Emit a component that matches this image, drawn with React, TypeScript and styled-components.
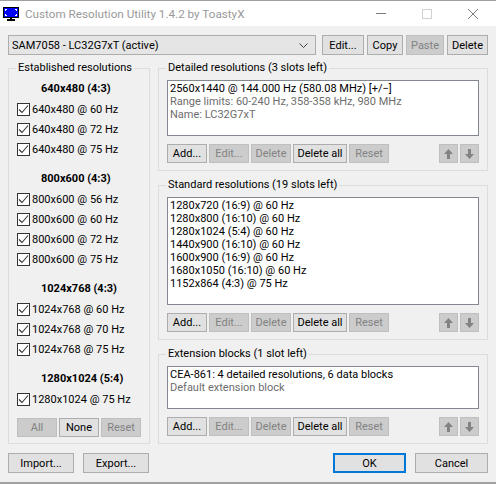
import React from "react";
import styled, { createGlobalStyle, css } from "styled-components";

const GlobalStyle = createGlobalStyle`
  html, body {
    margin: 0;
    padding: 0;
    background: #f0f0f0;
  }
  body {
    font-family: "Segoe UI", Roboto, "Liberation Sans", sans-serif;
    font-size: 11px;
    color: #000;
  }
  * {
    box-sizing: border-box;
  }
`;

const Window = styled.div`
  width: 496px;
  height: 484px;
  display: flex;
  flex-direction: column;
  background: #f0f0f0;
  border-top: 1px solid #a0a0a0;
  border-bottom: 2px solid #a0a0a0;
`;

const TitleBar = styled.div`
  height: 25px;
  display: flex;
  align-items: center;
  background: #fff;
  padding-left: 3px;
`;

const Title = styled.span`
  color: #999;
  font-size: 11.7px;
  margin-left: 6px;
  white-space: nowrap;
`;

const Captions = styled.div`
  margin-left: auto;
  display: flex;
  height: 100%;
`;

const CaptionButton = styled.div`
  width: 46px;
  height: 100%;
  display: flex;
  align-items: center;
  justify-content: center;
`;

const Body = styled.div`
  flex: 1;
  display: flex;
  flex-direction: column;
  padding: 9px 8px 0;
`;

const TopRow = styled.div`
  display: flex;
  gap: 3px;
  height: 20px;
`;

const Combo = styled.div`
  flex: 1;
  display: flex;
  align-items: center;
  margin-right: 3px;
  padding: 0 7px 0 3px;
  background: #e5e5e5;
  border: 1px solid #adadad;
  white-space: nowrap;

  svg {
    margin-left: auto;
  }
`;

const Button = styled.button<{ $w: number; $h?: number; $default?: boolean }>`
  flex: none;
  width: ${(p) => p.$w}px;
  height: ${(p) => p.$h ?? 19}px;
  margin: 0;
  padding: 0;
  font: inherit;
  line-height: 1;
  color: #000;
  background: #e1e1e1;
  border: 1px solid #adadad;
  border-radius: 0;
  display: flex;
  align-items: center;
  justify-content: center;
  white-space: nowrap;

  &:disabled {
    color: #838383;
    background: #cccccc;
    border-color: #bfbfbf;
  }

  ${(p) =>
    p.$default &&
    css`
      border: 2px solid #0078d7;
    `}
`;

const Main = styled.div`
  display: flex;
  gap: 8px;
  margin-top: 6px;
`;

const Group = styled.fieldset<{ $w?: number }>`
  margin: 0;
  min-width: 0;
  padding: 0 8px 7px;
  border: 1px solid #dcdcdc;
  ${(p) =>
    p.$w &&
    css`
      width: ${p.$w}px;
      flex: none;
    `}
`;

const Legend = styled.legend`
  margin-left: -1px;
  padding: 0 2px;
  line-height: 14px;
  white-space: nowrap;
`;

const LeftGroup = styled(Group)`
  padding-top: 4px;
  padding-bottom: 6px;
`;

const ResSection = styled.div`
  & + & {
    margin-top: 10px;
  }
`;

const ResHeading = styled.div`
  height: 20px;
  line-height: 20px;
  padding-left: 24px;
  font-weight: bold;
`;

const CheckRow = styled.label`
  height: 20px;
  display: flex;
  align-items: center;
  gap: 2px;
  white-space: nowrap;
`;

const CheckBox = styled.span`
  width: 13px;
  height: 13px;
  flex: none;
  display: flex;
  align-items: center;
  justify-content: center;
  background: #fff;
  border: 1px solid #333;
`;

const ButtonRow = styled.div`
  display: flex;
  gap: 2px;
  margin-top: 8px;
`;

const LeftButtons = styled(ButtonRow)`
  margin-top: 9px;
`;

const RightColumn = styled.div`
  flex: 1;
  display: flex;
  flex-direction: column;
  gap: 7px;
`;

const RightGroup = styled(Group)`
  padding-top: 5px;
`;

const ListBox = styled.div<{ $h: number }>`
  height: ${(p) => p.$h}px;
  padding: 1px 2px;
  background: #fff;
  border: 1px solid #828790;
  line-height: 13px;
  white-space: nowrap;
`;

const ListLine = styled.div<{ $muted?: boolean }>`
  color: ${(p) => (p.$muted ? "#6d6d6d" : "#000")};
`;

const Arrows = styled.div`
  margin-left: auto;
  display: flex;
  gap: 2px;
`;

const BottomRow = styled.div`
  display: flex;
  gap: 9px;
  margin-top: 9px;
`;

const Spacer = styled.div`
  flex: 1;
`;

const AppIcon = () => (
  <svg width="16" height="14" viewBox="0 0 16 14">
    <rect x="0" y="0" width="16" height="11" fill="#000" />
    <rect x="1" y="1" width="14" height="9" fill="#0000ff" />
    <path
      d="M2 2h2v1H3v1H2zM12 2h2v2h-1V3h-1zM2 7h1v1h1v1H2zM13 7h1v2h-2V8h1z"
      fill="#fff"
    />
    <rect x="7" y="11" width="2" height="1" fill="#000" />
    <rect x="4" y="12" width="8" height="2" fill="#000" />
  </svg>
);

const Check = () => (
  <svg width="11" height="11" viewBox="0 0 11 11">
    <path d="M1 5.5l3 3L10 1.5" fill="none" stroke="#333" strokeWidth="1.1" />
  </svg>
);

const Chevron = () => (
  <svg width="9" height="5" viewBox="0 0 9 5">
    <path d="M0.5 0.5l4 4 4-4" fill="none" stroke="#444" strokeWidth="1" />
  </svg>
);

const ArrowIcon = ({ down }: { down?: boolean }) => (
  <svg width="9" height="10" viewBox="0 0 9 10">
    <path d={down ? "M4.5 10L9 5H6V0H3v5H0z" : "M4.5 0L9 5H6v5H3V5H0z"} fill="#838383" />
  </svg>
);

const resolutionGroups = [
  { title: "640x480 (4:3)", modes: ["640x480 @ 60 Hz", "640x480 @ 72 Hz", "640x480 @ 75 Hz"] },
  {
    title: "800x600 (4:3)",
    modes: ["800x600 @ 56 Hz", "800x600 @ 60 Hz", "800x600 @ 72 Hz", "800x600 @ 75 Hz"],
  },
  {
    title: "1024x768 (4:3)",
    modes: ["1024x768 @ 60 Hz", "1024x768 @ 70 Hz", "1024x768 @ 75 Hz"],
  },
  { title: "1280x1024 (5:4)", modes: ["1280x1024 @ 75 Hz"] },
];

const standardModes = [
  "1280x720 (16:9) @ 60 Hz",
  "1280x800 (16:10) @ 60 Hz",
  "1280x1024 (5:4) @ 60 Hz",
  "1440x900 (16:10) @ 60 Hz",
  "1600x900 (16:9) @ 60 Hz",
  "1680x1050 (16:10) @ 60 Hz",
  "1152x864 (4:3) @ 75 Hz",
];

function ListButtons() {
  return (
    <ButtonRow>
      <Button $w={40}>Add...</Button>
      <Button $w={40} disabled>
        Edit...
      </Button>
      <Button $w={40} disabled>
        Delete
      </Button>
      <Button $w={54}>Delete all</Button>
      <Button $w={40} disabled>
        Reset
      </Button>
      <Arrows>
        <Button $w={19} disabled>
          <ArrowIcon />
        </Button>
        <Button $w={19} disabled>
          <ArrowIcon down />
        </Button>
      </Arrows>
    </ButtonRow>
  );
}

export default function App() {
  return (
    <>
      <GlobalStyle />
      <Window>
        <TitleBar>
          <AppIcon />
          <Title>Custom Resolution Utility 1.4.2 by ToastyX</Title>
          <Captions>
            <CaptionButton>
              <svg width="10" height="1">
                <rect width="10" height="1" fill="#7a7a7a" />
              </svg>
            </CaptionButton>
            <CaptionButton>
              <svg width="10" height="10">
                <rect x="0.5" y="0.5" width="9" height="9" fill="none" stroke="#d0d0d0" />
              </svg>
            </CaptionButton>
            <CaptionButton>
              <svg width="10" height="10">
                <path d="M0 0l10 10M10 0L0 10" stroke="#7a7a7a" strokeWidth="1" />
              </svg>
            </CaptionButton>
          </Captions>
        </TitleBar>

        <Body>
          <TopRow>
            <Combo>
              SAM7058 - LC32G7xT (active)
              <Chevron />
            </Combo>
            <Button $w={42} $h={20}>
              Edit...
            </Button>
            <Button $w={36} $h={20}>
              Copy
            </Button>
            <Button $w={38} $h={20} disabled>
              Paste
            </Button>
            <Button $w={41} $h={20}>
              Delete
            </Button>
          </TopRow>

          <Main>
            <LeftGroup $w={142}>
              <Legend>Established resolutions</Legend>
              {resolutionGroups.map((g) => (
                <ResSection key={g.title}>
                  <ResHeading>{g.title}</ResHeading>
                  {g.modes.map((m) => (
                    <CheckRow key={m}>
                      <CheckBox>
                        <Check />
                      </CheckBox>
                      {m}
                    </CheckRow>
                  ))}
                </ResSection>
              ))}
              <LeftButtons>
                <Button $w={40} disabled>
                  All
                </Button>
                <Button $w={40}>None</Button>
                <Button $w={40} disabled>
                  Reset
                </Button>
              </LeftButtons>
            </LeftGroup>

            <RightColumn>
              <RightGroup>
                <Legend>Detailed resolutions (3 slots left)</Legend>
                <ListBox $h={56}>
                  <ListLine>2560x1440 @ 144.000 Hz (580.08 MHz) [+/−]</ListLine>
                  <ListLine $muted>Range limits: 60-240 Hz, 358-358 kHz, 980 MHz</ListLine>
                  <ListLine $muted>Name: LC32G7xT</ListLine>
                </ListBox>
                <ListButtons />
              </RightGroup>

              <RightGroup>
                <Legend>Standard resolutions (19 slots left)</Legend>
                <ListBox $h={108}>
                  {standardModes.map((m) => (
                    <ListLine key={m}>{m}</ListLine>
                  ))}
                </ListBox>
                <ListButtons />
              </RightGroup>

              <RightGroup>
                <Legend>Extension blocks (1 slot left)</Legend>
                <ListBox $h={43}>
                  <ListLine>CEA-861: 4 detailed resolutions, 6 data blocks</ListLine>
                  <ListLine $muted>Default extension block</ListLine>
                </ListBox>
                <ListButtons />
              </RightGroup>
            </RightColumn>
          </Main>

          <BottomRow>
            <Button $w={66} $h={20}>
              Import...
            </Button>
            <Button $w={66} $h={20}>
              Export...
            </Button>
            <Spacer />
            <Button $w={73} $h={20} $default>
              OK
            </Button>
            <Button $w={73} $h={20}>
              Cancel
            </Button>
          </BottomRow>
        </Body>
      </Window>
    </>
  );
}
